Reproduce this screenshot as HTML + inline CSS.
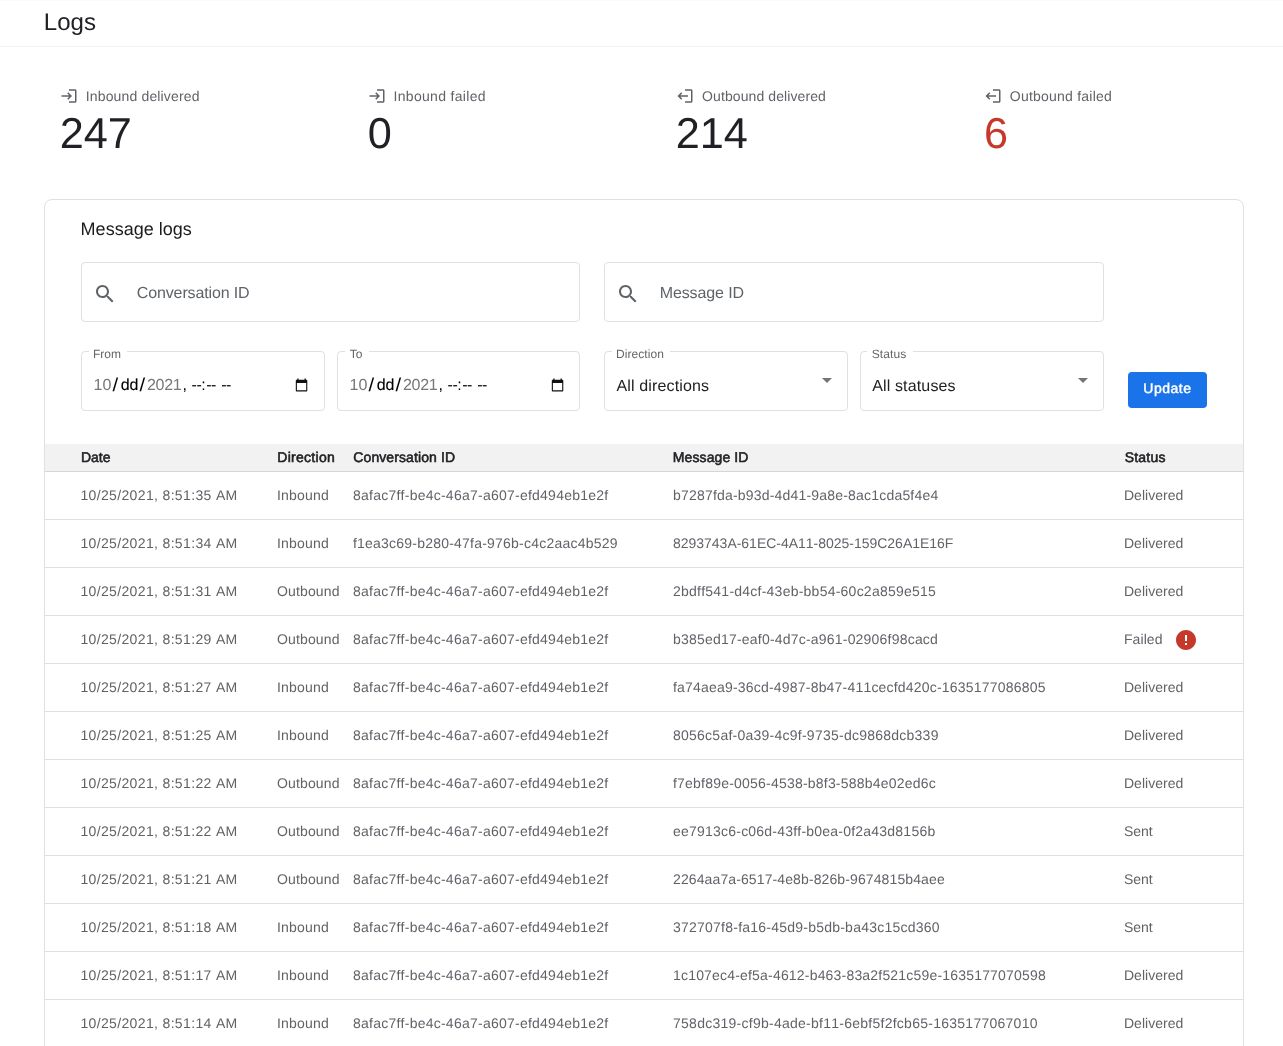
<!DOCTYPE html>
<html lang="en"><head><meta charset="utf-8"><title>Logs</title>
<style>
*{box-sizing:border-box}
html,body{margin:0;padding:0;background:#fff}
body{font-kerning:none;text-rendering:geometricPrecision;font-variant-ligatures:none;width:1283px;height:1046px;overflow:hidden;font-family:"Liberation Sans",Arial,sans-serif;color:#202124}
#root{position:relative;width:1283px;height:1046px;overflow:hidden;will-change:transform;background:#fff}
.t{position:absolute;white-space:nowrap;display:block}
.ic{position:absolute;display:block}
.top{position:absolute;left:0;top:0;width:1283px;height:47px;border-bottom:1px solid #f0f3f3;border-top:1px solid #fafafa}
h1,h2{margin:0;font-weight:400}
.card{position:absolute;left:44px;top:199px;width:1200px;height:900px;border:1px solid #e0e0e0;border-radius:8px;background:#fff}
  .sbox{position:absolute;top:262px;height:60px;border:1px solid #e0e0e0;border-radius:4px}
.fld{position:absolute;top:351px;height:60px;border:1px solid #e0e0e0;border-radius:4px}
.fld .notch{position:absolute;top:-1px;height:1px;background:#fff}
.arr{position:absolute;top:378px;width:0;height:0;border-left:5px solid transparent;border-right:5px solid transparent;border-top:5px solid #757575}
.btn{position:absolute;left:1128px;top:372px;width:79px;height:36px;border-radius:4px;background:#1a73e8}
table{position:absolute;left:45px;top:444px;width:1198px;border-collapse:collapse;table-layout:fixed;font-size:14px}
th{height:27px;background:#f2f2f2;border-bottom:1px solid #d6d6d6;text-align:left;font-weight:normal;-webkit-text-stroke:0.55px #202124;color:#202124;padding:0 0 1px 8px;white-space:nowrap;line-height:20px}
td{height:48px;border-bottom:1px solid #e0e0e0;color:#5f6368;padding:0 0 0 8px;white-space:nowrap;overflow:visible;line-height:20px;position:relative}
th.c1,td.c1{padding-left:36px}
th span,td span{display:inline-block}
.err{position:absolute;left:58.4px;top:12.4px}
</style></head><body><div id="root">
<div class="top"></div>
<h1><span class="t" style="left:43.73px;top:7.20px;font-size:24px;line-height:32px;color:#202124;letter-spacing:0.098px;">Logs</span></h1>
<svg class="ic" style="left:59.75px;top:87px" width="18" height="18" viewBox="0 0 24 24"><path fill="#5f6368" d="M11 7L9.6 8.4l2.6 2.6H2v2h10.2l-2.6 2.6L11 17l5-5-5-5zm9 12h-8v2h8c1.100 0 2-.9 2-2V5c0-1.100-.9-2-2-2h-8v2h8v14z"/></svg><span class="t" style="left:85.71px;top:85.90px;font-size:14px;line-height:20px;color:#5f6368;letter-spacing:0.155px;">Inbound delivered</span><span class="t" style="left:59.7px;top:108.00px;font-size:43.25px;line-height:52px;color:#202124;text-rendering:geometricPrecision">247</span>
<svg class="ic" style="left:367.75px;top:87px" width="18" height="18" viewBox="0 0 24 24"><path fill="#5f6368" d="M11 7L9.6 8.4l2.6 2.6H2v2h10.2l-2.6 2.6L11 17l5-5-5-5zm9 12h-8v2h8c1.100 0 2-.9 2-2V5c0-1.100-.9-2-2-2h-8v2h8v14z"/></svg><span class="t" style="left:393.51px;top:85.90px;font-size:14px;line-height:20px;color:#5f6368;letter-spacing:0.318px;">Inbound failed</span><span class="t" style="left:367.7px;top:108.00px;font-size:43.25px;line-height:52px;color:#202124;text-rendering:geometricPrecision">0</span>
<svg class="ic" style="left:675.75px;top:87px" width="18" height="18" viewBox="0 0 24 24"><path fill="#5f6368" d="M7 7l1.410 1.410L5.830 11H16v2H5.830l2.580 2.580L7 17l-5-5zM20 5h-8V3h8c1.100 0 2 .9 2 2v14c0 1.100-.9 2-2 2h-8v-2h8V5z"/></svg><span class="t" style="left:702.04px;top:85.90px;font-size:14px;line-height:20px;color:#5f6368;letter-spacing:0.098px;">Outbound delivered</span><span class="t" style="left:675.7px;top:108.00px;font-size:43.25px;line-height:52px;color:#202124;text-rendering:geometricPrecision">214</span>
<svg class="ic" style="left:983.75px;top:87px" width="18" height="18" viewBox="0 0 24 24"><path fill="#5f6368" d="M7 7l1.410 1.410L5.830 11H16v2H5.830l2.580 2.580L7 17l-5-5zM20 5h-8V3h8c1.100 0 2 .9 2 2v14c0 1.100-.9 2-2 2h-8v-2h8V5z"/></svg><span class="t" style="left:1009.84px;top:85.90px;font-size:14px;line-height:20px;color:#5f6368;letter-spacing:0.222px;">Outbound failed</span><span class="t" style="left:983.9px;top:108.00px;font-size:43.25px;line-height:52px;color:#c5392b;text-rendering:geometricPrecision">6</span>
<div class="card"></div>
<h2><span class="t" style="left:80.62px;top:217.10px;font-size:18px;line-height:24px;color:#1b1b1d;letter-spacing:0.015px;">Message logs</span></h2>
<div class="sbox" style="left:81px;width:499px"></div><svg class="ic" style="left:93px;top:282.3px" width="24" height="24" viewBox="0 0 24 24"><path fill="#5f6368" d="M15.5 14h-.79l-.28-.27C15.410 12.590 16 11.110 16 9.500 16 5.910 13.090 3 9.500 3S3 5.910 3 9.500 5.910 16 9.500 16c1.610 0 3.090-.59 4.230-1.570l.27.28v.79l5 4.990L20.490 19l-4.990-5zm-6 0C7.010 14 5 11.990 5 9.500S7.010 5 9.500 5 14 7.010 14 9.500 11.990 14 9.500 14z"/></svg><span class="t" style="left:136.79px;top:282.00px;font-size:16px;line-height:24px;color:#5f6368;letter-spacing:-0.131px;">Conversation ID</span>
<div class="sbox" style="left:604px;width:500px"></div><svg class="ic" style="left:616px;top:282.3px" width="24" height="24" viewBox="0 0 24 24"><path fill="#5f6368" d="M15.5 14h-.79l-.28-.27C15.410 12.590 16 11.110 16 9.500 16 5.910 13.090 3 9.500 3S3 5.910 3 9.500 5.910 16 9.500 16c1.610 0 3.090-.59 4.230-1.570l.27.28v.79l5 4.990L20.490 19l-4.990-5zm-6 0C7.010 14 5 11.990 5 9.500S7.010 5 9.500 5 14 7.010 14 9.500 11.990 14 9.500 14z"/></svg><span class="t" style="left:659.69px;top:282.00px;font-size:16px;line-height:24px;color:#5f6368;letter-spacing:-0.099px;">Message ID</span>
<div class="fld" style="left:81px;width:244px"><i class="notch" style="left:6.9px;width:38.1px"></i></div><span class="t" style="left:92.92px;top:345.70px;font-size:12px;line-height:16px;color:#666;letter-spacing:0.026px;">From</span><span class="t" style="left:93.38px;top:373.50px;font-size:16px;line-height:24px;color:#777;letter-spacing:0.247px;">10</span><span class="t" style="left:112.90px;top:373.50px;font-size:16px;line-height:24px;color:#000;letter-spacing:0.000px;transform:scale(1.27,1.157);transform-origin:50% 41%;">/</span><span class="t" style="left:120.63px;top:373.50px;font-size:16px;line-height:24px;color:#000;letter-spacing:0.006px;-webkit-text-stroke:0.12px #000;">dd</span><span class="t" style="left:139.80px;top:373.50px;font-size:16px;line-height:24px;color:#000;letter-spacing:0.000px;transform:scale(1.27,1.157);transform-origin:50% 41%;">/</span><span class="t" style="left:146.90px;top:373.50px;font-size:16px;line-height:24px;color:#777;letter-spacing:-0.269px;">2021</span><span class="t" style="left:182.56px;top:373.50px;font-size:16px;line-height:24px;color:#000;letter-spacing:0.000px;">,</span><span class="t" style="left:191.49px;top:373.50px;font-size:16px;line-height:24px;color:#000;letter-spacing:-0.334px;">--</span><span class="t" style="left:201.34px;top:373.50px;font-size:16px;line-height:24px;color:#000;letter-spacing:0.000px;">:</span><span class="t" style="left:206.19px;top:373.50px;font-size:16px;line-height:24px;color:#000;letter-spacing:-0.634px;">--</span><span class="t" style="left:221.19px;top:373.50px;font-size:16px;line-height:24px;color:#000;letter-spacing:-0.534px;">--</span><svg class="ic" style="left:295px;top:377px" width="14" height="16" viewBox="0 0 14 16"><path fill="#111" fill-rule="evenodd" d="M2.300 1.400h1.300v1.400H2.300zM9.500 1.400h1.300v1.400H9.500zM1.800 2.800h9.500c.55 0 1 .45 1 1v9.800c0 .55-.45 1-1 1H1.800c-.55 0-1-.45-1-1V3.800c0-.55.45-1 1-1zM1.900 6v7.300h9.300V6z"/></svg>
<div class="fld" style="left:337px;width:243px"><i class="notch" style="left:6.9px;width:23.8px"></i></div><span class="t" style="left:349.63px;top:345.70px;font-size:12px;line-height:16px;color:#666;letter-spacing:-1.230px;">To</span><span class="t" style="left:349.38px;top:373.50px;font-size:16px;line-height:24px;color:#777;letter-spacing:0.247px;">10</span><span class="t" style="left:368.90px;top:373.50px;font-size:16px;line-height:24px;color:#000;letter-spacing:0.000px;transform:scale(1.27,1.157);transform-origin:50% 41%;">/</span><span class="t" style="left:376.63px;top:373.50px;font-size:16px;line-height:24px;color:#000;letter-spacing:0.006px;-webkit-text-stroke:0.12px #000;">dd</span><span class="t" style="left:395.80px;top:373.50px;font-size:16px;line-height:24px;color:#000;letter-spacing:0.000px;transform:scale(1.27,1.157);transform-origin:50% 41%;">/</span><span class="t" style="left:402.90px;top:373.50px;font-size:16px;line-height:24px;color:#777;letter-spacing:-0.269px;">2021</span><span class="t" style="left:438.56px;top:373.50px;font-size:16px;line-height:24px;color:#000;letter-spacing:0.000px;">,</span><span class="t" style="left:447.49px;top:373.50px;font-size:16px;line-height:24px;color:#000;letter-spacing:-0.334px;">--</span><span class="t" style="left:457.34px;top:373.50px;font-size:16px;line-height:24px;color:#000;letter-spacing:0.000px;">:</span><span class="t" style="left:462.19px;top:373.50px;font-size:16px;line-height:24px;color:#000;letter-spacing:-0.634px;">--</span><span class="t" style="left:477.19px;top:373.50px;font-size:16px;line-height:24px;color:#000;letter-spacing:-0.534px;">--</span><svg class="ic" style="left:551px;top:377px" width="14" height="16" viewBox="0 0 14 16"><path fill="#111" fill-rule="evenodd" d="M2.300 1.400h1.300v1.400H2.300zM9.500 1.400h1.300v1.400H9.500zM1.800 2.800h9.500c.55 0 1 .45 1 1v9.800c0 .55-.45 1-1 1H1.800c-.55 0-1-.45-1-1V3.800c0-.55.45-1 1-1zM1.900 6v7.300h9.300V6z"/></svg>
<div class="fld" style="left:604px;width:244px"><i class="notch" style="left:6.9px;width:58.1px"></i></div><span class="t" style="left:615.92px;top:345.70px;font-size:12px;line-height:16px;color:#666;letter-spacing:0.089px;">Direction</span><span class="t" style="left:616.47px;top:374.60px;font-size:16px;line-height:24px;color:#202124;letter-spacing:0.139px;">All directions</span><i class="arr" style="left:822px"></i>
<div class="fld" style="left:860px;width:244px"><i class="notch" style="left:6.2px;width:45.5px"></i></div><span class="t" style="left:871.66px;top:345.70px;font-size:12px;line-height:16px;color:#666;letter-spacing:0.132px;">Status</span><span class="t" style="left:872.17px;top:374.60px;font-size:16px;line-height:24px;color:#202124;letter-spacing:0.145px;">All statuses</span><i class="arr" style="left:1078px"></i>
<div class="btn"></div><span class="t" style="left:1143.32px;top:378.00px;font-size:14px;line-height:20px;color:#fff;letter-spacing:0.492px;-webkit-text-stroke:0.45px #fff;">Update</span>
<table>
<colgroup><col style="width:224px"><col style="width:76px"><col style="width:320px"><col style="width:451px"><col></colgroup>
<thead><tr><th class="c1"><span style="letter-spacing:-0.034px;margin-left:-0.05px">Date</span></th><th><span style="letter-spacing:0.290px;margin-left:0.25px">Direction</span></th><th><span style="letter-spacing:0.100px;margin-left:0.29px">Conversation ID</span></th><th><span style="letter-spacing:0.091px;margin-left:-0.15px">Message ID</span></th><th><span style="letter-spacing:0.230px;margin-left:0.66px">Status</span></th></tr></thead>
<tbody>
<tr><td class="c1"><span style="letter-spacing:0.351px;margin-left:-0.57px">10/25/2021, 8:51:35 AM</span></td><td><span style="letter-spacing:0.217px">Inbound</span></td><td><span style="letter-spacing:0.241px">8afac7ff-be4c-46a7-a607-efd494eb1e2f</span></td><td><span style="letter-spacing:0.193px">b7287fda-b93d-4d41-9a8e-8ac1cda5f4e4</span></td><td><span style="letter-spacing:0.012px">Delivered</span></td></tr>
<tr><td class="c1"><span style="letter-spacing:0.351px;margin-left:-0.57px">10/25/2021, 8:51:34 AM</span></td><td><span style="letter-spacing:0.217px">Inbound</span></td><td><span style="letter-spacing:0.216px">f1ea3c69-b280-47fa-976b-c4c2aac4b529</span></td><td><span style="letter-spacing:-0.017px">8293743A-61EC-4A11-8025-159C26A1E16F</span></td><td><span style="letter-spacing:0.012px">Delivered</span></td></tr>
<tr><td class="c1"><span style="letter-spacing:0.351px;margin-left:-0.57px">10/25/2021, 8:51:31 AM</span></td><td><span style="letter-spacing:0.142px">Outbound</span></td><td><span style="letter-spacing:0.241px">8afac7ff-be4c-46a7-a607-efd494eb1e2f</span></td><td><span style="letter-spacing:0.237px">2bdff541-d4cf-43eb-bb54-60c2a859e515</span></td><td><span style="letter-spacing:0.012px">Delivered</span></td></tr>
<tr><td class="c1"><span style="letter-spacing:0.351px;margin-left:-0.57px">10/25/2021, 8:51:29 AM</span></td><td><span style="letter-spacing:0.142px">Outbound</span></td><td><span style="letter-spacing:0.241px">8afac7ff-be4c-46a7-a607-efd494eb1e2f</span></td><td><span style="letter-spacing:0.206px">b385ed17-eaf0-4d7c-a961-02906f98cacd</span></td><td><span style="letter-spacing:0.066px">Failed</span><svg class="err" width="24" height="24" viewBox="0 0 24 24"><path fill="#c5392b" d="M12 2C6.48 2 2 6.48 2 12s4.48 10 10 10 10-4.480 10-10S17.52 2 12 2zm1 15h-2v-2h2v2zm0-4h-2V7h2v6z"/></svg></td></tr>
<tr><td class="c1"><span style="letter-spacing:0.351px;margin-left:-0.57px">10/25/2021, 8:51:27 AM</span></td><td><span style="letter-spacing:0.217px">Inbound</span></td><td><span style="letter-spacing:0.241px">8afac7ff-be4c-46a7-a607-efd494eb1e2f</span></td><td><span style="letter-spacing:0.198px">fa74aea9-36cd-4987-8b47-411cecfd420c-1635177086805</span></td><td><span style="letter-spacing:0.012px">Delivered</span></td></tr>
<tr><td class="c1"><span style="letter-spacing:0.351px;margin-left:-0.57px">10/25/2021, 8:51:25 AM</span></td><td><span style="letter-spacing:0.217px">Inbound</span></td><td><span style="letter-spacing:0.241px">8afac7ff-be4c-46a7-a607-efd494eb1e2f</span></td><td><span style="letter-spacing:0.245px">8056c5af-0a39-4c9f-9735-dc9868dcb339</span></td><td><span style="letter-spacing:0.012px">Delivered</span></td></tr>
<tr><td class="c1"><span style="letter-spacing:0.351px;margin-left:-0.57px">10/25/2021, 8:51:22 AM</span></td><td><span style="letter-spacing:0.142px">Outbound</span></td><td><span style="letter-spacing:0.241px">8afac7ff-be4c-46a7-a607-efd494eb1e2f</span></td><td><span style="letter-spacing:0.211px">f7ebf89e-0056-4538-b8f3-588b4e02ed6c</span></td><td><span style="letter-spacing:0.012px">Delivered</span></td></tr>
<tr><td class="c1"><span style="letter-spacing:0.351px;margin-left:-0.57px">10/25/2021, 8:51:22 AM</span></td><td><span style="letter-spacing:0.142px">Outbound</span></td><td><span style="letter-spacing:0.241px">8afac7ff-be4c-46a7-a607-efd494eb1e2f</span></td><td><span style="letter-spacing:0.218px">ee7913c6-c06d-43ff-b0ea-0f2a43d8156b</span></td><td><span style="letter-spacing:-0.057px">Sent</span></td></tr>
<tr><td class="c1"><span style="letter-spacing:0.351px;margin-left:-0.57px">10/25/2021, 8:51:21 AM</span></td><td><span style="letter-spacing:0.142px">Outbound</span></td><td><span style="letter-spacing:0.241px">8afac7ff-be4c-46a7-a607-efd494eb1e2f</span></td><td><span style="letter-spacing:0.111px">2264aa7a-6517-4e8b-826b-9674815b4aee</span></td><td><span style="letter-spacing:-0.057px">Sent</span></td></tr>
<tr><td class="c1"><span style="letter-spacing:0.351px;margin-left:-0.57px">10/25/2021, 8:51:18 AM</span></td><td><span style="letter-spacing:0.217px">Inbound</span></td><td><span style="letter-spacing:0.241px">8afac7ff-be4c-46a7-a607-efd494eb1e2f</span></td><td><span style="letter-spacing:0.231px">372707f8-fa16-45d9-b5db-ba43c15cd360</span></td><td><span style="letter-spacing:-0.057px">Sent</span></td></tr>
<tr><td class="c1"><span style="letter-spacing:0.351px;margin-left:-0.57px">10/25/2021, 8:51:17 AM</span></td><td><span style="letter-spacing:0.217px">Inbound</span></td><td><span style="letter-spacing:0.241px">8afac7ff-be4c-46a7-a607-efd494eb1e2f</span></td><td><span style="letter-spacing:0.188px">1c107ec4-ef5a-4612-b463-83a2f521c59e-1635177070598</span></td><td><span style="letter-spacing:0.012px">Delivered</span></td></tr>
<tr><td class="c1"><span style="letter-spacing:0.351px;margin-left:-0.57px">10/25/2021, 8:51:14 AM</span></td><td><span style="letter-spacing:0.217px">Inbound</span></td><td><span style="letter-spacing:0.241px">8afac7ff-be4c-46a7-a607-efd494eb1e2f</span></td><td><span style="letter-spacing:0.258px">758dc319-cf9b-4ade-bf11-6ebf5f2fcb65-1635177067010</span></td><td><span style="letter-spacing:0.012px">Delivered</span></td></tr>
</tbody></table>
</div></body></html>
